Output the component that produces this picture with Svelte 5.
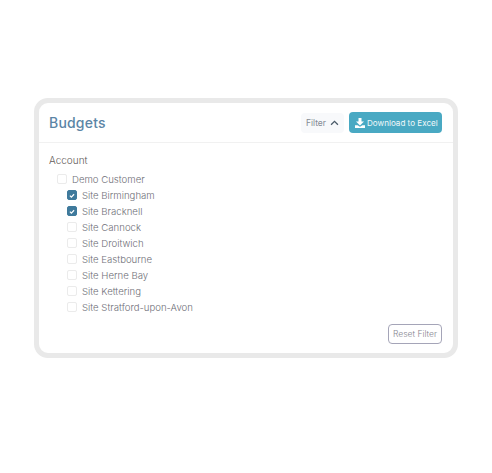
<script>
  const sites = [
    ['Site Birmingham', true], ['Site Bracknell', true], ['Site Cannock', false],
    ['Site Droitwich', false], ['Site Eastbourne', false], ['Site Herne Bay', false],
    ['Site Kettering', false], ['Site Stratford-upon-Avon', false]
  ];
</script>

<div class="page">
  <section class="card">
    <header class="head">
      <h1>Budgets</h1>
      <div class="actions">
        <button class="filter">Filter
          <svg width="9" height="6" viewBox="0 0 10 7"><path d="M1 5.5 5 1.5 9 5.5" fill="none" stroke="#4a5a68" stroke-width="1.5"/></svg>
        </button>
        <button class="dl">
          <svg width="10" height="10" viewBox="0 0 10 10"><path d="M3.5 0h3v3.5H9L5 7.4 1 3.5h2.5z M0 7.2h2.6L5 8.8l2.4-1.6H10V10H0z" fill="#fff"/></svg>
          Download to Excel
        </button>
      </div>
    </header>
    <div class="body">
      <div class="label">Account</div>
      <div class="row root"><span class="box"></span><span>Demo Customer</span></div>
      {#each sites as [name, on]}
        <div class="row site">
          <span class="box" class:on>
            {#if on}<svg width="9" height="9" viewBox="0 0 10 10"><path d="M2.4 5.2 4.2 7 7.6 3.4" fill="none" stroke="#fff" stroke-width="1.5"/></svg>{/if}
          </span>
          <span>{name}</span>
        </div>
      {/each}
      <div class="foot"><button class="reset">Reset Filter</button></div>
    </div>
  </section>
</div>

<style>
  :global(body) { margin: 0; background: #fff; }
  .page { width: 492px; height: 473px; padding: 98px 34px 0; box-sizing: border-box; font-family: Inter, "Liberation Sans", sans-serif; }
  .card { width: 424px; height: 260px; box-sizing: border-box; border: 5px solid #e9e9e9; border-radius: 14px; background: #fff; }
  .head { height: 39px; display: flex; align-items: center; justify-content: space-between; padding: 0 11px 0 10px; border-bottom: 1px solid #f1f1f1; }
  h1 { margin: 0; font-size: 14px; font-weight: 500; color: #5b85a6; letter-spacing: 0.2px; }
  .actions { display: flex; align-items: center; gap: 5px; }
  button { font-family: inherit; cursor: pointer; }
  .filter { height: 20px; padding: 0 5px; border: 0; border-radius: 4px; background: #f8f9fb; color: #838b94; font-size: 8.5px; font-weight: 400; display: flex; align-items: center; gap: 4px; }
  .dl { height: 21px; width: 93px; padding: 0 0 0 6px; border: 0; border-radius: 4px; background: #49a9c3; color: #f0f8fa; font-size: 8.1px; font-weight: 400; display: flex; align-items: center; gap: 2px; white-space: nowrap; }
  .body { padding: 11px 10px 0; }
  .label { font-size: 10px; font-weight: 300; color: #5f5a58; line-height: 13px; margin-bottom: 4px; }
  .row { height: 16px; display: flex; align-items: center; gap: 5px; font-size: 9.6px; font-weight: 300; color: #6f6f78; white-space: nowrap; }
  .root { padding-left: 8px; }
  .site { padding-left: 18px; }
  .box { width: 10px; height: 10px; box-sizing: border-box; flex: none; display: flex; align-items: center; justify-content: center; border-radius: 2px; border: 1px solid #ebebeb; background: #fff; }
  .box.on { background: #3f7a9c; border-color: #3f7a9c; }
  .foot { display: flex; justify-content: flex-end; margin: 9px 1px 0 0; }
  .reset { width: 54px; height: 20px; padding: 0; border: 1px solid #a5a5b8; border-radius: 4px; background: #fff; color: #85858e; font-size: 8.5px; font-weight: 300; white-space: nowrap; }
</style>
